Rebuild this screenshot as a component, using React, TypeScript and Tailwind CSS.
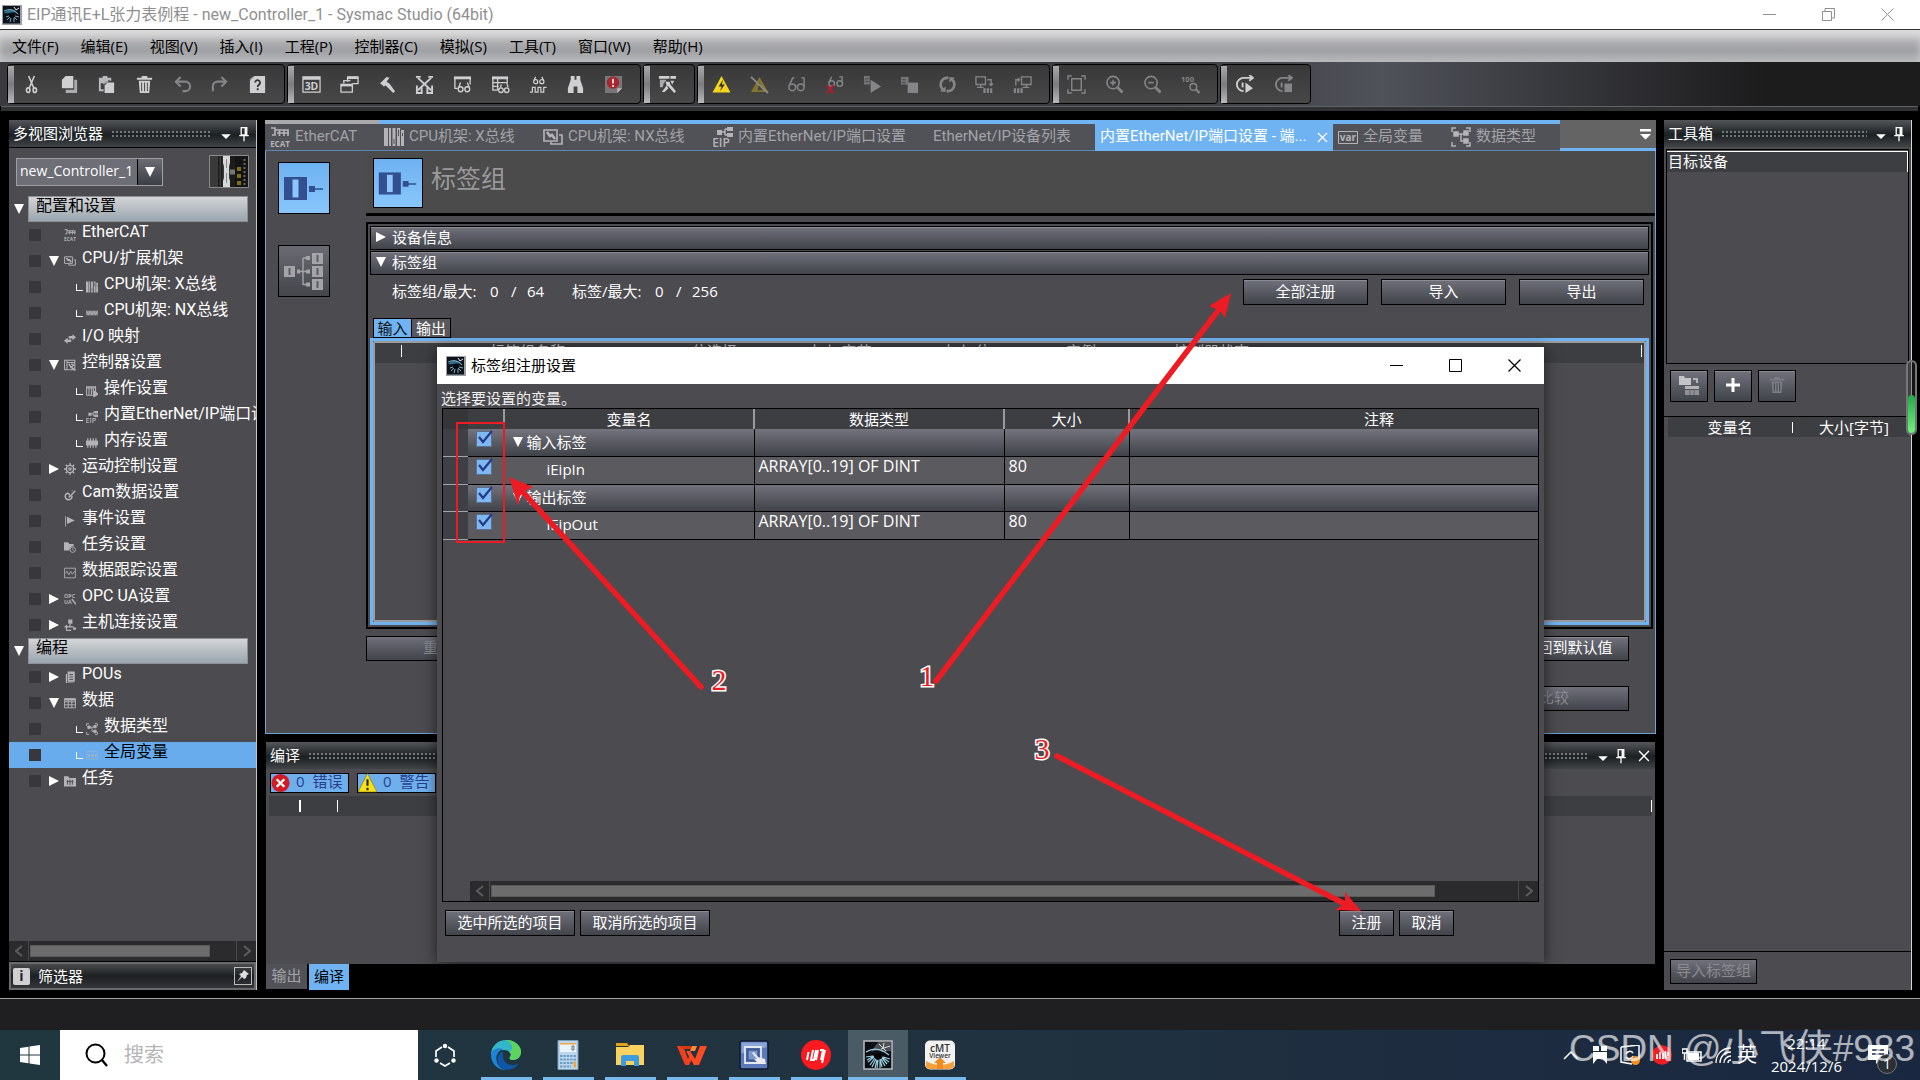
import type { ReactNode } from "react";

/* ---------- icons ---------- */

const glyphs: Record<string, ReactNode> = {
  cut: (
    <g fill="none" stroke="currentColor" strokeWidth="1.700">
      <path d="M7 1l5.500 13M13 1L7.500 14" />
      <ellipse cx="6.500" cy="16" rx="1.800" ry="2.400" />
      <ellipse cx="13.500" cy="16" rx="1.800" ry="2.400" />
    </g>
  ),
  copy: (
    <g fill="currentColor">
      <path d="M6 1h8v13H2V5z" />
      <path d="M15 5h3v14H6v-3.500h9z" opacity=".75" />
    </g>
  ),
  paste: (
    <g fill="currentColor">
      <path d="M2 3h4V1h5v2h4v3h-2V5L4 9v6h3v2H2z" opacity=".85" />
      <path d="M11 8h7v11H8v-8z" />
      <path d="M5 8l7-3v2L7 10z" opacity=".7" />
    </g>
  ),
  trash: (
    <g fill="currentColor">
      <path d="M7 1h6v2h5v2H2V3h5z" />
      <path d="M4 6h12l-1 13H5z" />
      <path d="M7 8v9M10 8v9M13 8v9" stroke="#444" strokeWidth="1" />
    </g>
  ),
  undo: (
    <g fill="none" stroke="currentColor" strokeWidth="2.200">
      <path d="M4 7h9a4 4 0 0 1 0 10h-3" />
      <path d="M8 2L3 7l5 5" />
    </g>
  ),
  redo: (
    <g fill="none" stroke="currentColor" strokeWidth="2.200">
      <path d="M16 7H8a5 5 0 0 0-5 5v5" />
      <path d="M12 2l5 5-5 5" />
    </g>
  ),
  help: (
    <g>
      <path d="M7 1h11v18H2V6z" fill="currentColor" />
      <path d="M1 5L6 1v4z" fill="currentColor" opacity=".6" />
      <path d="M7.500 8a2.600 2.600 0 1 1 4 2.200c-1 .7-1.300 1-1.300 2.300" fill="none" stroke="#333" strokeWidth="1.900" />
      <path d="M9.200 14h2v2h-2z" fill="#333" />
    </g>
  ),
  threed: (
    <g>
      <path d="M1 2h18v16H1z" fill="none" stroke="currentColor" strokeWidth="1.300" />
      <path d="M1 2h18v3H1z" fill="currentColor" />
      <text x="10" y="15.500" textAnchor="middle" fontSize="11" fontWeight="700" fill="currentColor">3D</text>
    </g>
  ),
  windows: (
    <g fill="none" stroke="currentColor" strokeWidth="1.400">
      <path d="M8 7V2h11v7h-6" />
      <path d="M8 3h11" strokeWidth="2.500" />
      <path d="M1 10h12v8H1z" />
      <path d="M1 11h12" strokeWidth="2" />
      <path d="M4 9V6h7" />
    </g>
  ),
  hammer: (
    <g fill="currentColor">
      <path d="M2 9l7-7 3 1-3 4 3 2 6 8-2 2-8-8-2 1-2-2z" />
    </g>
  ),
  cross: (
    <g fill="none" stroke="currentColor">
      <path d="M3 3l14 13M17 3L3 16" strokeWidth="2" />
      <path d="M1 2h5M14 2h5" strokeWidth="2" />
      <path d="M2 11v8h5v-6M18 11v8h-5v-6" strokeWidth="2" />
    </g>
  ),
  watch: (
    <g fill="none" stroke="currentColor" strokeWidth="1.400">
      <path d="M1 3h18" strokeWidth="3" />
      <path d="M2 4v10h3M18 4v6" />
      <circle cx="8" cy="15" r="2.600" />
      <circle cx="15" cy="15" r="2.600" />
      <path d="M6 13l2-5M17 13l-2-5" />
    </g>
  ),
  watch2: (
    <g fill="none" stroke="currentColor" strokeWidth="1.400">
      <path d="M1 3h17" strokeWidth="3" />
      <path d="M2 4v12h5M2 8h15M2 12h6M7 4v12M17 4v6" />
      <circle cx="10.500" cy="16" r="2.400" />
      <circle cx="16.500" cy="16" r="2.400" />
      <path d="M10 13l1-3M18 13l-1-3" />
    </g>
  ),
  trace: (
    <g fill="none" stroke="currentColor" strokeWidth="1.300">
      <circle cx="7" cy="7" r="2.200" />
      <circle cx="13.500" cy="7" r="2.200" />
      <path d="M5 6l2-4M15.500 6l-2-4" />
      <path d="M1 18h2.500v-5h3v5h3v-5h3v5h3v-5h3" />
    </g>
  ),
  find: (
    <g fill="currentColor">
      <path d="M5 1h4v4h2V1h4v4l3 9v5h-6v-7H8v7H2v-5l3-9z" />
    </g>
  ),
  alert: (
    <g>
      <path d="M1 1h18v13l-5 5H1z" fill="#77777a" />
      <path d="M14 19v-5h5" fill="#bbb" />
      <circle cx="9.500" cy="8" r="6.500" fill="#a8242e" />
      <path d="M9.500 4v5M9.500 10.500v2" stroke="#ddd" strokeWidth="2" />
    </g>
  ),
  wrench: (
    <g fill="currentColor">
      <path d="M1 1h11v3H1zM13 1h6v3h-6z" />
      <path d="M2 5h7L6 9l-1 4H2z" opacity=".75" />
      <path d="M8 7h4l1 3 6 7-2 2-6-7-2-1z" />
      <path d="M13 6h4l-2 4zM4 18l5-7 2 3-4 4z" />
    </g>
  ),
  volt: (
    <g>
      <path d="M10 1L19.500 18.500H.5z" fill="#f2d51c" />
      <path d="M11.500 5L7 12h3l-1.500 5 5-7h-3z" fill="#333" />
    </g>
  ),
  voltoff: (
    <g>
      <path d="M10 2l9 16H1z" fill="#84762a" />
      <path d="M10 7l3 9H8z" fill="#444" />
      <path d="M1 2l18 17" stroke="#8b8b8d" strokeWidth="2" />
    </g>
  ),
  glasses: (
    <g fill="none" stroke="currentColor" strokeWidth="1.500">
      <circle cx="5.500" cy="13" r="3.500" />
      <circle cx="14.500" cy="13" r="3.500" />
      <path d="M2 12L6 3h2M18 12V3h-3M9 12h2" />
    </g>
  ),
  glassesx: (
    <g fill="none" stroke="currentColor" strokeWidth="1.500">
      <circle cx="7" cy="9" r="3" />
      <circle cx="15.500" cy="9" r="3" />
      <path d="M4 8l3-6M18 8V2h-3" />
      <path d="M2 11l7 8M9 11l-7 8" stroke="#a8202f" strokeWidth="2.600" />
    </g>
  ),
  run: (
    <g fill="currentColor">
      <path d="M1 1h6v9H1z" opacity=".8" />
      <path d="M8 5l11 7-11 7z" />
      <path d="M2 4h4M2 7h4" stroke="#444" />
    </g>
  ),
  halt: (
    <g fill="currentColor">
      <path d="M1 2h8v8H1z" opacity=".8" />
      <path d="M8 8h11v11H8z" />
      <path d="M2 5h4M2 8h4" stroke="#444" />
    </g>
  ),
  sync: (
    <g fill="none" stroke="currentColor" strokeWidth="2.800">
      <path d="M11 3H9a7 7 0 0 0-4 12M9 17h2a7 7 0 0 0 4-12" />
      <path d="M8 12v6l-6-1zM12 8V2l6 1z" fill="currentColor" stroke="none" />
    </g>
  ),
  download: (
    <g fill="none" stroke="currentColor" strokeWidth="1.400">
      <path d="M1 2h10v8H1zM6 10v3M2 13h7M13 5h4v6M15 9l2 2 2-2" />
      <path d="M10 14v5M13.500 14v5M17 14v5" strokeWidth="2.400" />
    </g>
  ),
  upload: (
    <g fill="none" stroke="currentColor" strokeWidth="1.400">
      <path d="M9 2h10v8H9zM14 10v3M10 13h7M7 5H3v6M5 3l2 2-2 2" />
      <path d="M2 14v5M5.500 14v5M9 14v5" strokeWidth="2.400" />
    </g>
  ),
  fit: (
    <g fill="none" stroke="currentColor" strokeWidth="1.500">
      <path d="M5 4h10v12H5z" />
      <path d="M1 5V1h4M15 1h4v4M19 15v4h-4M5 19H1v-4" />
    </g>
  ),
  zoomin: (
    <g fill="none" stroke="currentColor" strokeWidth="1.700">
      <circle cx="8.500" cy="8" r="6.500" />
      <path d="M8.500 5v6M5.500 8h6" />
      <path d="M13 13l5.500 5.500" strokeWidth="3" />
    </g>
  ),
  zoomout: (
    <g fill="none" stroke="currentColor" strokeWidth="1.700">
      <circle cx="8.500" cy="8" r="6.500" />
      <path d="M5.500 8h6" />
      <path d="M13 13l5.500 5.500" strokeWidth="3" />
    </g>
  ),
  zoom100: (
    <g fill="none" stroke="currentColor" strokeWidth="1.500">
      <text x="0" y="7.500" fontSize="8" fontWeight="700" stroke="none" fill="currentColor">100</text>
      <circle cx="13" cy="12.500" r="3.500" />
      <path d="M15.500 15l4 4" strokeWidth="2.200" />
    </g>
  ),
  simrun: (
    <g fill="none" stroke="currentColor" strokeWidth="2">
      <path d="M9 17a7 7 0 1 1 0-14h9M15 0l4 3-4 3" />
      <path d="M8 8v5" />
      <path d="M11 8l8 6-8 5z" fill="currentColor" stroke="none" />
    </g>
  ),
  simstop: (
    <g fill="none" stroke="currentColor" strokeWidth="2">
      <path d="M9 17a7 7 0 1 1 0-14h9M15 0l4 3-4 3" />
      <path d="M8 8v5" />
      <path d="M11 9h8v9h-8z" fill="currentColor" stroke="none" />
    </g>
  ),
  ecat: (
    <g fill="currentColor">
      <path d="M1 1h4v2h14M5 3v5H2M9.500 3v6M14 3v6M18 3v6M7 6h12" fill="none" stroke="currentColor" strokeWidth="1.600" />
      <text x="10" y="19.500" textAnchor="middle" fontSize="8" fontWeight="700">ECAT</text>
    </g>
  ),
  rack: (
    <g fill="none" stroke="currentColor" strokeWidth="1.600">
      <path d="M1 3h13v11H1zM16 8h3v9H8v-2" />
      <path d="M4 5l3 4 2-1 3 4" strokeWidth="2.600" />
    </g>
  ),
  xbus: (
    <g fill="currentColor">
      <path d="M0 1h7v18H0zM8.500 1h3v18h-3zM13 1h3v18h-3zM17 3h3v16h-3z" />
      <path d="M4.500 1v18M10 12v5M14.500 3v6M18.500 6v3" stroke="#515257" />
    </g>
  ),
  nxbus: (
    <g fill="currentColor">
      <path d="M0 6h20v8H0z" opacity=".6" />
      <path d="M1 7l3 6 3-6 3 6 3-6 3 6 3-6" fill="none" stroke="currentColor" strokeWidth="1.600" />
    </g>
  ),
  io: (
    <g fill="currentColor">
      <path d="M8 5h6V2l6 5-6 5V9H8zM12 11H6V8l-6 5 6 5v-3h6z" />
    </g>
  ),
  ctrl: (
    <g fill="none" stroke="currentColor" strokeWidth="1.700">
      <path d="M1 2h17v16H1zM5 2v16M5 6h13" />
      <path d="M8 8l4 6 7 5M12 8l4 2-4 4" strokeWidth="2.400" />
    </g>
  ),
  oper: (
    <g fill="none" stroke="currentColor" strokeWidth="1.700">
      <path d="M1 3h15v14H1zM5 3v14M9 6v11M12 6v8M1 5h15" />
      <path d="M13 10l7 5-7 5z" fill="currentColor" />
    </g>
  ),
  eip: (
    <g fill="currentColor">
      <path d="M4 3h5v5H4zM14 0h6v4h-6zM14 6h6v4h-6z" />
      <path d="M8 5h4M12 2v6M12 2h3M12 8h3" stroke="currentColor" strokeWidth="1.500" fill="none" />
      <text x="8" y="20" textAnchor="middle" fontSize="12" fontWeight="600">EIP</text>
    </g>
  ),
  mem: (
    <g fill="currentColor">
      <path d="M0 6h20v8H0z" />
      <path d="M3 2v16M7.500 2v16M12 2v16M16.500 2v16" stroke="currentColor" strokeWidth="2" />
    </g>
  ),
  gear: (
    <g fill="none" stroke="currentColor">
      <circle cx="10" cy="10" r="6" strokeWidth="2.400" />
      <circle cx="10" cy="10" r="2" strokeWidth="2" />
      <path d="M10 0v4M10 16v4M0 10h4M16 10h4M3 3l3 3M14 14l3 3M17 3l-3 3M6 14l-3 3" strokeWidth="2.200" />
    </g>
  ),
  cam: (
    <g fill="none" stroke="currentColor" strokeWidth="2.400">
      <path d="M13 11a5.500 5.500 0 1 1-7-4c3 0 2 3 4 3" />
      <path d="M8 14L19 3M13 3h1" />
    </g>
  ),
  flag: (
    <g fill="currentColor">
      <path d="M2 2h1.500v17H2zM5 3l13 6-13 6z" />
    </g>
  ),
  taskset: (
    <g fill="currentColor">
      <path d="M0 2h7l2 3h7v4a6 6 0 0 0-7 7H0z" />
      <circle cx="14.500" cy="14.500" r="4.500" fill="none" stroke="currentColor" strokeWidth="1.500" />
      <path d="M14.500 12v3h2" fill="none" stroke="currentColor" />
    </g>
  ),
  dtrace: (
    <g fill="none" stroke="currentColor" strokeWidth="1.400">
      <path d="M1 2h18v16H1z" />
      <path d="M2 11l3-4 3 6 3-6 3 5 4-5" />
    </g>
  ),
  opc: (
    <g fill="currentColor">
      <text x="0" y="9" fontSize="9" fontWeight="700">OPC</text>
      <text x="0" y="19" fontSize="9" fontWeight="700">UA</text>
      <path d="M13 10l7 9" stroke="currentColor" strokeWidth="2.400" />
    </g>
  ),
  host: (
    <g fill="currentColor">
      <path d="M7 1h7v7H7zM15 14h5v4h-5z" />
      <path d="M10 8v5h6M10 13H4v6M1 14l3-3 3 3M4 19h8" fill="none" stroke="currentColor" strokeWidth="2" />
    </g>
  ),
  pou: (
    <g fill="currentColor">
      <path d="M6 1h12v17H6zM3 5h2v14h11v1H3z" />
      <path d="M9 6h6M9 10h6M9 14h6" stroke="#4c4b4f" strokeWidth="1.600" />
    </g>
  ),
  data: (
    <g fill="none" stroke="currentColor" strokeWidth="1.600">
      <path d="M1 3h18v15H1zM1 8h18M1 13h18M7 4v14M13 4v14" />
      <path d="M1 4h18" strokeWidth="3.500" />
    </g>
  ),
  dtype: (
    <g fill="none" stroke="currentColor" strokeWidth="1.500">
      <path d="M5 1H1v4M15 1h4v4M19 15v4h-4M5 19H1v-4" />
      <path d="M3 5h4v4H3zM13 4h4v4h-4zM13 12h4v4h-4z" fill="currentColor" />
      <path d="M7 7h6M10 7v7h3" />
    </g>
  ),
  varr: (
    <g fill="currentColor">
      <path d="M.5 4.500h19v12H.5z" fill="none" stroke="currentColor" />
      <text x="10" y="13.500" textAnchor="middle" fontSize="10" fontWeight="700">var</text>
    </g>
  ),
  tasks: (
    <g fill="currentColor">
      <path d="M0 2h7l2 3h11v14H0z" />
      <path d="M4 11h12M10 7v10M6 8v8M14 8v8" stroke="#4c4b4f" strokeWidth="1.500" />
    </g>
  ),
  pin: (
    <g fill="none" stroke="#fff" strokeWidth="1.600">
      <path d="M6.500 2h7v9h-7zM4 12h12M10 12v7" />
      <path d="M12 2v9" strokeWidth="2.500" />
    </g>
  ),
  down: <path d="M2 7h16l-8 8z" fill="currentColor" />,
  close: <path d="M3 3l14 14M17 3L3 17" stroke="currentColor" strokeWidth="2" fill="none" />,
};

function Glyph({ name, className }: { name: string; className: string }) {
  return (
    <svg viewBox="0 0 20 20" className={`shrink-0 ${className}`} fontFamily="Open Sans, sans-serif" aria-hidden="true">
      {glyphs[name]}
    </svg>
  );
}

function AppLogo({ className }: { className: string }) {
  return (
    <svg viewBox="0 0 20 20" className={`shrink-0 ${className}`} aria-hidden="true">
      <path d="M0 0h20v20H0z" fill="#9a9fa3" />
      <path d="M1 1h17v17.500H1z" fill="#0c131c" />
      <path d="M2 8C6 3 13 3 17 10c-2-2-4-3-6-2.500C8 7 5 9 2 8z" fill="#2c6f8e" />
      <g stroke="#8fb9c9" strokeWidth=".9" fill="none">
        <path d="M4 12l3-1M5 15l3-3M8 17l1-4M12 17v-4M15 15l-3-3M17 12l-4-1M2 6q8-4 14 3" />
        <path d="M12 2l2 3M17 3l-3 2" stroke="#fff" />
      </g>
      <circle cx="10" cy="10" r="2.200" fill="#020509" />
    </svg>
  );
}

function Tri({ open, className = "" }: { open: boolean; className?: string }) {
  return (
    <svg viewBox="0 0 10 10" className={`size-[10px] shrink-0 ${className}`} aria-hidden="true">
      <path d={open ? "M0 0h10L5 10z" : "M0 0v10l10-5z"} fill="#fff" />
    </svg>
  );
}

/* ---------- shared pieces ---------- */

const raised =
  "border border-black bg-linear-to-b from-[#70717b] to-[#42444b] shadow-[inset_0_1px_0_#8b8c94] pb-[2px] text-[15px] leading-none text-white";

const dimmed =
  "border border-black bg-linear-to-b from-[#70717b] to-[#42444b] pb-[2px] text-[15px] leading-none text-[#8b8b91]";

function PanelHeader({ title, closable = false }: { title: string; closable?: boolean }) {
  return (
    <div className="flex h-[27px] shrink-0 items-center gap-2 bg-linear-to-b from-[#55565a] via-[#1b2023] via-55% to-[#424547] px-1 text-[15px] text-white">
      <h2 className="shrink-0 leading-none">{title}</h2>
      <div className="h-[7px] flex-1 bg-[radial-gradient(#77797c_1px,transparent_1px)] bg-[length:4px_4px]" />
      <button type="button" aria-label="窗口位置" className="flex">
        <Glyph name="down" className="mt-1 size-3" />
      </button>
      <button type="button" aria-label="固定" className="-ml-1 flex">
        <Glyph name="pin" className="size-4" />
      </button>
      {closable && (
        <button type="button" aria-label="关闭" className="flex">
          <Glyph name="close" className="size-[14px]" />
        </button>
      )}
    </div>
  );
}

/* ---------- title, menu, toolbar ---------- */

function TitleBar() {
  return (
    <header className="flex h-[29px] shrink-0 items-center bg-white pl-[2px] text-[#8f8f8f]">
      <AppLogo className="size-5" />
      <h1 className="ml-[5px] flex-1 text-base leading-none [font-family:'Roboto','Noto_Sans_CJK_SC',sans-serif]">EIP通讯E+L张力表例程 - new_Controller_1 - Sysmac Studio (64bit)</h1>
      <div className="flex gap-[46px] pr-[26px]">
        <button type="button" aria-label="最小化">
          <svg viewBox="0 0 13 13" className="size-[13px]"><path d="M0 6.500h13" stroke="currentColor" /></svg>
        </button>
        <button type="button" aria-label="向下还原">
          <svg viewBox="0 0 13 13" className="size-[13px]"><path d="M.5 3.500h9v9h-9zM3 3V.5h9.500V10H10" fill="none" stroke="currentColor" /></svg>
        </button>
        <button type="button" aria-label="关闭">
          <svg viewBox="0 0 13 13" className="size-[13px]"><path d="M.5 .5l12 12M12.500 .5l-12 12" stroke="currentColor" /></svg>
        </button>
      </div>
    </header>
  );
}

const menus = ["文件(F)", "编辑(E)", "视图(V)", "插入(I)", "工程(P)", "控制器(C)", "模拟(S)", "工具(T)", "窗口(W)", "帮助(H)"];

function MenuBar() {
  return (
    <nav className="flex h-[33px] shrink-0 items-center gap-[22px] border-t border-[#333] bg-linear-to-b from-[#bcbcbe] via-[#a0a1a4] via-65% to-[#b8b9bb] px-3 shadow-[inset_0_9px_8px_-2px_#dcdcdc]">
      {menus.map((m) => (
        <button key={m} type="button" className="text-[15px] leading-none text-black">{m}</button>
      ))}
    </nav>
  );
}

const toolGroups: { width: string; items: [string, boolean][] }[] = [
  { width: "w-[278px]", items: [["cut", true], ["copy", true], ["paste", true], ["trash", true], ["undo", false], ["redo", false], ["help", true]] },
  { width: "w-[354px]", items: [["threed", true], ["windows", true], ["hammer", true], ["cross", true], ["watch", true], ["watch2", true], ["trace", true], ["find", true], ["alert", true]] },
  { width: "w-[52px]", items: [["wrench", true]] },
  { width: "w-[353px]", items: [["volt", true], ["voltoff", true], ["glasses", false], ["glassesx", false], ["run", false], ["halt", false], ["sync", false], ["download", false], ["upload", false]] },
  { width: "w-[166px]", items: [["fit", false], ["zoomin", false], ["zoomout", false], ["zoom100", false]] },
  { width: "w-[91px]", items: [["simrun", true], ["simstop", false]] },
];

function Toolbar() {
  return (
    <div className="shrink-0 bg-black">
      <div className="flex h-11 items-center gap-[2px] bg-linear-to-r from-[#3a3b3e] from-60% via-[#50525a] via-72% to-[#1c1c1d] to-92% pl-[7px]">
        {toolGroups.map((g, i) => (
          <div key={i} className={`flex h-10 items-center rounded-sm border border-black bg-linear-to-b from-[#383838] to-[#484848] ${g.width}`}>
            <span className="h-[37px] w-[6px] bg-linear-to-b from-[#a9a9ab] via-[#7c7c7e] to-[#b9b9bb]" />
            <div className="flex flex-1 justify-between pr-[17px] pl-2">
              {g.items.map(([n, on]) => (
                <button key={n} type="button" aria-label={n} className={on ? "flex text-[#cfcfd1]" : "flex text-[#858588]"}>
                  <Glyph name={n} className="size-[19px]" />
                </button>
              ))}
            </div>
          </div>
        ))}
      </div>
      <div className="mr-[2px] ml-[1px] h-[5px] border-t border-[#606264] bg-[#303133]" />
    </div>
  );
}

/* ---------- project tree ---------- */

type Node = { label: string; kind: "head" | "item" | "leaf" | "child"; icon?: string; open?: boolean; selected?: boolean };

const tree: Node[] = [
  { label: "配置和设置", kind: "head" },
  { label: "EtherCAT", kind: "leaf", icon: "ecat" },
  { label: "CPU/扩展机架", kind: "item", icon: "rack", open: true },
  { label: "CPU机架: X总线", kind: "child", icon: "xbus" },
  { label: "CPU机架: NX总线", kind: "child", icon: "nxbus" },
  { label: "I/O 映射", kind: "leaf", icon: "io" },
  { label: "控制器设置", kind: "item", icon: "ctrl", open: true },
  { label: "操作设置", kind: "child", icon: "oper" },
  { label: "内置EtherNet/IP端口设置", kind: "child", icon: "eip" },
  { label: "内存设置", kind: "child", icon: "mem" },
  { label: "运动控制设置", kind: "item", icon: "gear", open: false },
  { label: "Cam数据设置", kind: "leaf", icon: "cam" },
  { label: "事件设置", kind: "leaf", icon: "flag" },
  { label: "任务设置", kind: "leaf", icon: "taskset" },
  { label: "数据跟踪设置", kind: "leaf", icon: "dtrace" },
  { label: "OPC UA设置", kind: "item", icon: "opc", open: false },
  { label: "主机连接设置", kind: "item", icon: "host", open: false },
  { label: "编程", kind: "head" },
  { label: "POUs", kind: "item", icon: "pou", open: false },
  { label: "数据", kind: "item", icon: "data", open: true },
  { label: "数据类型", kind: "child", icon: "dtype" },
  { label: "全局变量", kind: "child", icon: "varr", selected: true },
  { label: "任务", kind: "item", icon: "tasks", open: false },
];

function TreeRow({ node }: { node: Node }) {
  if (node.kind === "head") {
    return (
      <li className="flex h-[26px] items-center pr-2 pl-[5px]">
        <Tri open />
        <button type="button" className="ml-1 h-[26px] flex-1 border border-[#8c9094] bg-linear-to-b from-[#d4d5d7] to-[#9aa5ae] pb-[6px] pl-[7px] text-left text-base leading-none text-black">
          {node.label}
        </button>
      </li>
    );
  }
  return (
    <li className={`flex h-[26px] items-center pl-5 ${node.selected ? "bg-[#68acee] text-black" : "text-white"}`}>
      <span className="size-3 shrink-0 bg-[#38383c]" />
      {node.kind === "child" ? (
        <span className="mr-[3px] ml-[35px] h-[7px] w-[7px] shrink-0 border-b border-l border-white" />
      ) : node.kind === "item" ? (
        <Tri open={!!node.open} className="mr-[5px] ml-2" />
      ) : (
        <span className="ml-[23px]" />
      )}
      <Glyph name={node.icon ?? "data"} className={node.selected ? "size-3 text-[#a9b6c4]" : "size-3 text-[#b4b4b8]"} />
      <button type="button" className="ml-[6px] pb-[6px] text-left text-base leading-none whitespace-nowrap">{node.label}</button>
    </li>
  );
}

function HScroll({ thumb }: { thumb: string }) {
  return (
    <div className="flex h-5 items-center bg-[#2b2b2d] text-[#5c5c5f]">
      <button type="button" aria-label="向左滚动" className="flex h-full w-5 items-center justify-center border-r border-[#47474a]">
        <svg viewBox="0 0 8 12" className="h-3 w-2"><path d="M7 1L1 6l6 5" fill="none" stroke="currentColor" strokeWidth="2" /></svg>
      </button>
      <div className="flex-1 px-px">
        <div className={`h-3 border border-[#5a5a5a] bg-[#6c6c6c] ${thumb}`} />
      </div>
      <button type="button" aria-label="向右滚动" className="flex h-full w-5 items-center justify-center border-l border-[#47474a]">
        <svg viewBox="0 0 8 12" className="h-3 w-2"><path d="M1 1l6 5-6 5" fill="none" stroke="currentColor" strokeWidth="2" /></svg>
      </button>
    </div>
  );
}

function Explorer() {
  return (
    <aside className="flex w-[248px] shrink-0 flex-col overflow-hidden border-r border-[#c4c4c4] bg-[#4c4b4f]">
      <PanelHeader title="多视图浏览器" />
      <div className="flex items-center justify-between border-t border-black pt-[7px] pr-[7px] pl-[7px]">
        <label className="relative flex">
          <span className="sr-only">控制器</span>
          <select className="h-7 w-[147px] appearance-none border border-[#a0a0a4] bg-[#6d6e76] pb-[2px] pl-[3px] text-sm leading-none text-white">
            <option>new_Controller_1</option>
          </select>
          <span className="pointer-events-none absolute inset-y-px right-px flex w-[25px] items-center justify-center border-l border-black bg-linear-to-b from-[#6a6b73] to-[#3d3f46]">
            <Tri open />
          </span>
        </label>
        <svg viewBox="0 0 40 33" className="h-[33px] w-10" aria-hidden="true">
          <path d="M.5 .5h39v32H.5z" fill="#3a3a3b" stroke="#8a8a8c" />
          <path d="M9 1h1.500v31H9zM12 1h1.500v31H12zM21 1h5v31h-5z" fill="#1c1c1c" />
          <path d="M14 1h7v7l-1 3v12l1 3v6h-7v-6l1-3V11l-1-3z" fill="#d8d8d8" />
          <path d="M17.500 4v9M17.500 18v10" stroke="#888" />
          <path d="M26 1h13v31H26z" fill="#141414" />
          <path d="M28 12h4v4h-4zM28 19h4v4h-4zM28 26h4v4h-4z" fill="#7c6f1a" />
          <path d="M35.500 4v27" stroke="#666" strokeWidth="2" strokeDasharray="2 2" />
          <path d="M21 17h5" stroke="#777" strokeWidth="5" />
        </svg>
      </div>
      <ul className="mt-2 flex-1 [font-family:'Roboto','Noto_Sans_CJK_SC',sans-serif]">
        {tree.map((n, i) => (
          <TreeRow key={i} node={n} />
        ))}
      </ul>
      <HScroll thumb="w-[88%]" />
      <div className="mt-px flex h-7 items-center gap-2 border-2 border-[#6a6a6c] bg-linear-to-b from-[#4b4c4e] via-[#1d2022] to-[#34363a] pr-[2px] pl-[2px] outline outline-black">
        <span className="flex size-[17px] items-center justify-center rounded-xs bg-[#d0d0d2] text-sm leading-none font-bold text-[#222]">i</span>
        <span className="flex-1 text-[15px] leading-none text-white">筛选器</span>
        <button type="button" aria-label="固定筛选器" className="flex size-[18px] items-center justify-center border border-[#bbb]">
          <svg viewBox="0 0 14 14" className="size-[14px]"><path d="M8 1l5 4-2 1-1 3-2 1-2-2-5 5 4-6-2-2 3-1z" fill="#ddd" /></svg>
        </button>
      </div>
    </aside>
  );
}

/* ---------- editor ---------- */

const tabs: { label: string; icon?: string; cls: string; active?: boolean }[] = [
  { label: "EtherCAT", icon: "ecat", cls: "w-[114px] border-t-[#a9a9ab]" },
  { label: "CPU机架: X总线", icon: "xbus", cls: "w-[159px] border-t-[#6fb3f2]" },
  { label: "CPU机架: NX总线", icon: "rack", cls: "w-[170px] border-t-[#6fb3f2]" },
  { label: "内置EtherNet/IP端口设置", icon: "eip", cls: "w-[220px] border-t-[#6fb3f2]" },
  { label: "EtherNet/IP设备列表", cls: "w-[167px] border-t-[#6fb3f2]" },
  { label: "内置EtherNet/IP端口设置 - 端...", cls: "w-[238px] border-t-[#6fb3f2]", active: true },
  { label: "全局变量", icon: "varr", cls: "w-[113px] border-t-[#6fb3f2]" },
  { label: "数据类型", icon: "dtype", cls: "w-[114px] border-t-[#6fb3f2]" },
];

function EditorTabs() {
  return (
    <div className="flex h-[31px] shrink-0 bg-[#646464] [font-family:'Roboto','Noto_Sans_CJK_SC',sans-serif]" role="tablist">
      {tabs.map((t, i) => (
        <div
          key={i}
          className={`flex shrink-0 items-center overflow-hidden border-t-4 border-b pl-[5px] ${t.cls} ${t.active ? "border-b-[#6fb3f2] bg-[#6fb3f2] text-white" : "border-b-[#5c86b3] bg-[#515257] text-[#a2a3a8]"}`}
        >
          {t.icon && <Glyph name={t.icon} className="mr-[5px] size-5 text-[#b4b4b8]" />}
          <button type="button" role="tab" aria-selected={!!t.active} className="pb-[2px] text-[15px] leading-none whitespace-nowrap">{t.label}</button>
          {t.active && (
            <button type="button" aria-label="关闭选项卡" className="mr-1 ml-auto flex">
              <Glyph name="close" className="size-[13px]" />
            </button>
          )}
        </div>
      ))}
      <div className="flex flex-1 items-center justify-end border-b-[3px] border-[#6fb3f2] pr-[5px]">
        <button type="button" aria-label="选项卡列表">
          <svg viewBox="0 0 11 11" className="size-[11px]"><path d="M0 0h11v2.500H0zM0 5h11l-5.500 5.500z" fill="#fff" /></svg>
        </button>
      </div>
    </div>
  );
}

function TagIcon() {
  return (
    <svg viewBox="0 0 50 50" className="size-full" aria-hidden="true">
      <path d="M5 14h23v23H5z" fill="#32508f" />
      <path d="M13.500 16.500h6v18h-6z" fill="#8cc6fa" />
      <path d="M30 23h6v6h-6zM36 25.200h8v1.600h-8z" fill="#32508f" />
    </svg>
  );
}

function Editor() {
  return (
    <section className="flex min-h-0 flex-col border-x border-b border-[#6ea3d8] bg-[#4c4b4f]">
      <div className="flex h-[582px]">
        <div className="flex w-[100px] shrink-0 flex-col gap-[31px] pt-[11px] pl-3">
          <button type="button" aria-label="标签组" className="size-[52px] border border-black bg-linear-to-b from-[#6fb2f2] to-[#88c6fb]">
            <TagIcon />
          </button>
          <button type="button" aria-label="连接" className="size-[52px] border border-black bg-linear-to-b from-[#6a6b73] to-[#44464c]">
            <svg viewBox="0 0 50 50" className="size-full" aria-hidden="true">
              <g fill="#a4a4a8">
                <path d="M5 20h11v11H5zM33 7h11v11H33zM33 20h11v11H33zM33 33h11v11H33z" />
                <path d="M18 23.500h3v4h-3zM27 10h4v4h-4zM27 23.500h4v4h-4zM27 36.500h4v4h-4z" />
              </g>
              <path d="M20 25.500h8M24 12v27M24 12h5M24 38.500h5" stroke="#a4a4a8" strokeWidth="1.400" fill="none" />
              <path d="M9.500 22h2v7h-2zM37.500 9h2v7h-2zM37.500 22h2v7h-2zM37.500 35h2v7h-2z" fill="#5c5d64" />
            </svg>
          </button>
        </div>
        <div className="min-w-0 flex-1">
          <div className="flex h-[65px] items-start gap-2 border-b-[3px] border-black bg-[#4b4b4c] pt-[7px] pl-[7px]">
            <div className="size-[50px] border border-black bg-linear-to-b from-[#6fb2f2] to-[#88c6fb]">
              <TagIcon />
            </div>
            <h2 className="pt-2 text-[25px] leading-none text-[#99999b]">标签组</h2>
          </div>
          <div className="mt-[6px] mr-[2px] flex h-[407px] flex-col border-2 border-black p-[2px]">
            <button type="button" className={`flex h-6 shrink-0 items-center gap-[6px] pl-[5px] ${raised}`}>
              <Tri open={false} />
              设备信息
            </button>
            <button type="button" className={`mt-px flex h-6 shrink-0 items-center gap-[6px] pl-[5px] ${raised}`}>
              <Tri open />
              标签组
            </button>
            <div className="mt-1 flex h-[26px] shrink-0 items-center pr-[5px] pl-[22px] text-[15px] leading-none text-white">
              <p className="flex w-[180px] pb-[2px]">
                <span className="w-[98px]">标签组/最大:</span>
                <span className="w-[21px]">0</span>
                <span className="w-4">/</span>
                <span>64</span>
              </p>
              <p className="flex flex-1 pb-[2px]">
                <span className="w-[83px]">标签/最大:</span>
                <span className="w-[21px]">0</span>
                <span className="w-4">/</span>
                <span>256</span>
              </p>
              <div className="flex gap-[13px]">
                <button type="button" className={`h-[26px] w-[125px] ${raised}`}>全部注册</button>
                <button type="button" className={`h-[26px] w-[125px] ${raised}`}>导入</button>
                <button type="button" className={`h-[26px] w-[125px] ${raised}`}>导出</button>
              </div>
            </div>
            <div className="mt-[13px] ml-[3px] flex h-5 shrink-0 text-[15px] leading-none">
              <button type="button" className="w-[39px] border border-black bg-[#6fb3f2] text-[#111]">输入</button>
              <button type="button" className="w-[39px] border border-l-0 border-black bg-[#59595d] text-white">输出</button>
            </div>
            <div className="flex min-h-0 flex-1 flex-col border-[3px] border-[#6fb3f2]">
              <div className="flex-1 overflow-hidden rounded-xs border-2 border-[#9b9b9e]">
                <div className="flex h-5 items-center bg-[#3d3e42] pb-1 text-[15px] leading-none text-[#d0d0d0]">
                  <span className="ml-[26px] h-3 w-px bg-white" />
                  <span className="ml-[88px] w-[202px]">标签组名称</span>
                  <span className="w-[115px]">位选择</span>
                  <span className="w-[134px]">大小(字节)</span>
                  <span className="w-[125px]">大小(位)</span>
                  <span className="w-[108px]">实例ID</span>
                  <span className="flex-1">控制器状态</span>
                  <span className="mr-[2px] h-3 w-px bg-white" />
                </div>
              </div>
            </div>
          </div>
          <div className="mt-[7px] flex justify-between pr-[26px]">
            <button type="button" className={`h-[25px] w-[226px] ${dimmed}`}>重新开始(设备)(I)</button>
            <button type="button" className={`h-[25px] w-[123px] ${raised}`}>返回到默认值</button>
          </div>
          <div className="mt-[25px] flex justify-end pr-[26px]">
            <button type="button" className={`h-[25px] w-[150px] ${dimmed}`}>比较</button>
          </div>
        </div>
      </div>
    </section>
  );
}

function BuildPanel() {
  return (
    <section className="mt-2 flex flex-1 flex-col px-px">
      <div className="flex flex-1 flex-col bg-[#4c4b4f]">
        <PanelHeader title="编译" closable />
        <div className="flex gap-2 px-1 pt-1 text-[15px] leading-none text-[#2a3f8c]">
          <button type="button" className="flex h-5 w-[79px] items-center border border-black bg-[#6fb0ec]">
            <svg viewBox="0 0 20 20" className="h-5 w-[19px] shrink-0"><circle cx="10" cy="10" r="9.500" fill="#d01c26" /><path d="M6 6l8 8M14 6l-8 8" stroke="#fff" strokeWidth="2.400" /></svg>
            <span className="ml-[6px] pb-1">0</span>
            <span className="ml-2 pb-1">错误</span>
          </button>
          <button type="button" className="flex h-5 w-[79px] items-center border border-black bg-[#6fb0ec]">
            <svg viewBox="0 0 20 20" className="h-5 w-[19px] shrink-0"><path d="M10 0l10 19.500H0z" fill="#f7e017" stroke="#776a10" strokeWidth=".6" /><path d="M10 6v7M10 15v2.500" stroke="#222" strokeWidth="2.200" /></svg>
            <span className="ml-[6px] pb-1">0</span>
            <span className="ml-2 pb-1">警告</span>
          </button>
        </div>
        <div className="mx-[3px] mt-[3px] flex h-5 items-center bg-[#3d3e42]">
          <span className="ml-[30px] h-3 w-[2px] bg-white" />
          <span className="ml-9 h-3 w-px bg-white" />
          <span className="ml-auto h-3 w-px bg-white" />
        </div>
      </div>
      <div className="flex h-[26px] shrink-0 gap-[2px] text-[15px] leading-none">
        <button type="button" className="h-[25px] w-[41px] bg-[#515257] pb-[2px] text-[#a2a3a8]">输出</button>
        <button type="button" className="w-10 bg-[#6fb3f2] pb-[2px] text-black">编译</button>
      </div>
    </section>
  );
}

/* ---------- toolbox ---------- */

function Toolbox() {
  return (
    <aside className="relative mr-2 flex w-[248px] shrink-0 flex-col border-r border-[#d6d6d6] bg-[#4c4b4f]">
      <PanelHeader title="工具箱" />
      <div className="mx-[2px] mt-[2px] h-[215px] border border-black">
        <div className="mt-px h-[21px] border-t border-r border-white bg-[#3d3e42] pl-px text-[15px] leading-[18px] text-white">目标设备</div>
      </div>
      <div className="flex gap-[6px] px-[6px] py-[6px]">
        <button type="button" aria-label="从文件导入" className={`flex h-8 w-[38px] items-center justify-center ${raised}`}>
          <svg viewBox="0 0 20 20" className="size-5"><path d="M0 1h5l1 2h6v7H0z" fill="#c4c4c8" /><path d="M14 3h5v5h-2V5h-3zM6 11h14v3H6z" fill="#b5b5b9" /><path d="M6 15h14v5H6z" fill="#8f9096" /><path d="M11 15v5M15 15v5" stroke="#66676d" /></svg>
        </button>
        <button type="button" aria-label="添加" className={`flex h-8 w-[38px] items-center justify-center ${raised}`}>
          <svg viewBox="0 0 16 16" className="size-4"><path d="M6.500 1h3v5.500H15v3H9.500V15h-3V9.500H1v-3h5.500z" fill="#fff" /></svg>
        </button>
        <button type="button" aria-label="删除" className={`flex h-8 w-[38px] items-center justify-center ${raised}`}>
          <Glyph name="trash" className="size-[18px] text-[#7b7c84]" />
        </button>
      </div>
      <div className="mt-2 flex flex-1 flex-col border-y border-black">
        <div className="mr-[2px] ml-1 flex h-5 items-center bg-[#3d3e42] text-[15px] leading-none text-white">
          <span className="w-[124px] text-center">变量名</span>
          <span className="h-[11px] w-px bg-white" />
          <span className="flex-1 pl-[6px] text-center">大小[字节]</span>
        </div>
      </div>
      <div className="flex h-[38px] shrink-0 items-center pl-[6px]">
        <button type="button" className={`h-[25px] w-[87px] ${dimmed}`}>导入标签组</button>
      </div>
      <div className="absolute top-[240px] -right-[6px] flex h-[75px] w-[11px] flex-col justify-end rounded-full border-2 border-[#77777a] bg-[#303033]/40">
        <div className="h-[38px] rounded-full bg-linear-to-b from-[#1fa848] to-[#6ff27c]" />
      </div>
    </aside>
  );
}

/* ---------- dialog ---------- */

const vars: { group: boolean; name: string; type: string; size: string; h: string }[] = [
  { group: true, name: "输入标签", type: "", size: "", h: "h-[27px]" },
  { group: false, name: "iEipIn", type: "ARRAY[0..19] OF DINT", size: "80", h: "h-7" },
  { group: true, name: "输出标签", type: "", size: "", h: "h-[27px]" },
  { group: false, name: "iEipOut", type: "ARRAY[0..19] OF DINT", size: "80", h: "h-7" },
];

function Dialog() {
  return (
    <div role="dialog" aria-labelledby="dlg-title" className="absolute top-[347px] right-[376px] left-[437px] flex h-[615px] flex-col bg-[#4c4b4f] shadow-[0_2px_14px_rgba(0,0,0,0.6)]">
      <div className="flex h-[37px] shrink-0 items-center bg-white pr-[23px] pl-[9px] text-black">
        <AppLogo className="size-5" />
        <h2 id="dlg-title" className="ml-[5px] flex-1 text-[15px] leading-none">标签组注册设置</h2>
        <div className="flex gap-[46px]">
          <button type="button" aria-label="最小化">
            <svg viewBox="0 0 13 13" className="size-[13px]"><path d="M0 6.500h13" stroke="currentColor" /></svg>
          </button>
          <button type="button" aria-label="最大化">
            <svg viewBox="0 0 13 13" className="size-[13px]"><path d="M.5 .5h12v12H.5z" fill="none" stroke="currentColor" /></svg>
          </button>
          <button type="button" aria-label="关闭">
            <svg viewBox="0 0 13 13" className="size-[13px]"><path d="M.5 .5l12 12M12.500 .5l-12 12" stroke="currentColor" strokeWidth="1.200" /></svg>
          </button>
        </div>
      </div>
      <p className="mt-[5px] h-[19px] pl-1 text-[15px] leading-[18px] text-[#f0f0f0]">选择要设置的变量。</p>
      <div className="mr-[5px] ml-[5px] flex h-[494px] flex-col border border-black">
        <table className="w-full table-fixed border-collapse text-[15px] leading-none text-white">
          <colgroup>
            <col className="w-[25px]" />
            <col className="w-9" />
            <col className="w-[250px]" />
            <col className="w-[250px]" />
            <col className="w-[125px]" />
            <col />
          </colgroup>
          <thead>
            <tr className="h-5 bg-[#3d3e42]">
              <td className="bg-[#363638]" />
              <td className="border-r-2 border-[#9b9b9e]" />
              <th scope="col" className="border-r-2 border-[#9b9b9e] font-normal">变量名</th>
              <th scope="col" className="border-r-2 border-[#9b9b9e] font-normal">数据类型</th>
              <th scope="col" className="border-r-2 border-[#9b9b9e] font-normal">大小</th>
              <th scope="col" className="pl-[90px] font-normal">注释</th>
            </tr>
          </thead>
          <tbody>
            {vars.map((v) => (
              <tr key={v.name} className={`${v.h} ${v.group ? "bg-linear-to-b from-[#73747d] to-[#41434a]" : "bg-[#5b5a5e]"}`}>
                <td className="border-b border-[#a4a4a6] bg-[#3f4045]" />
                <td className="border-r border-b border-black p-0 pl-2 align-top">
                  <label className="relative mt-[2px] block size-4">
                    <span className="sr-only">{v.name}</span>
                    <input type="checkbox" defaultChecked className="block size-4 appearance-none border border-[#55718f] bg-[#7fb7f0]" />
                    <svg viewBox="0 0 16 16" className="pointer-events-none absolute inset-0 size-4 overflow-visible" aria-hidden="true">
                      <path d="M3 6l4 5 9-11" fill="none" stroke="#24388a" strokeWidth="2.200" />
                    </svg>
                  </label>
                </td>
                <td className="border-r border-b border-black p-0">
                  {v.group ? (
                    <span className="flex items-center gap-1 pl-2">
                      <Tri open />
                      {v.name}
                    </span>
                  ) : (
                    <span className="block pb-[2px] pl-[42px]">{v.name}</span>
                  )}
                </td>
                <td className="border-r border-b border-black p-0 pb-2 pl-1 text-base leading-none">{v.type}</td>
                <td className="border-r border-b border-black p-0 pb-2 pl-1 text-base leading-none">{v.size}</td>
                <td className="border-b border-black" />
              </tr>
            ))}
          </tbody>
        </table>
        <div className="mt-auto pl-[27px]">
          <HScroll thumb="w-[92%]" />
        </div>
      </div>
      <div className="mt-2 flex gap-[5px] pr-[90px] pl-2">
        <button type="button" className={`h-[26px] w-[130px] ${raised}`}>选中所选的项目</button>
        <button type="button" className={`h-[26px] w-[130px] ${raised}`}>取消所选的项目</button>
        <span className="flex-1" />
        <button type="button" className={`h-[26px] w-[55px] ${raised}`}>注册</button>
        <button type="button" className={`h-[26px] w-[55px] ${raised}`}>取消</button>
      </div>
    </div>
  );
}

/* ---------- red callouts drawn over the windows ---------- */

function Callouts() {
  return (
    <svg viewBox="0 0 1920 1080" className="pointer-events-none absolute top-0 left-0 h-[1080px] w-[1920px]" aria-hidden="true">
      <g stroke="#ed1c24" strokeLinecap="round" fill="none">
        <path d="M457 423h47v119h-47z" strokeWidth="2" />
        <path d="M936 681L1217 312M701 687L521 490M1057 756L1343 903" strokeWidth="5.500" />
      </g>
      <g fill="#ed1c24">
        <path d="M1231 293L1209 306L1216 309L1222 313L1225 318z" />
        <path d="M509 477L533 487L525 491L520 496L518 506z" />
        <path d="M1361 911L1345 892L1345 900L1341 906L1335 910z" />
      </g>
      <g fill="#ed1c24" stroke="#fff" strokeWidth="3" paintOrder="stroke" fontFamily="Liberation Serif, serif" fontSize="30" textAnchor="middle">
        <text x="719" y="690">2</text>
        <text x="927" y="686">1</text>
        <text x="1042" y="759">3</text>
      </g>
    </svg>
  );
}

/* ---------- taskbar ---------- */

const taskIcons: { name: string; active?: boolean; art: ReactNode }[] = [
  {
    name: "Edge",
    art: (
      <>
        <path d="M0 15C0 6 7 0 15 0c9 0 15 6 15 12 0 5-4 8-8 8-3 0-4-1-3-3 2-3-1-7-6-7C7 10 1 12 0 15z" fill="#33b6c9" />
        <path d="M15 0c9 0 15 6 15 12 0 5-4 8-8 8-3 0-4-1-3-3 2-2 1-4-1-5 5-2 4-9-3-12z" fill="#5fd45c" />
        <path d="M0 15c0-5 7-8 12-6-5 2-8 7-6 13 1 4 5 7 9 8C6 30 0 23 0 15z" fill="#1b84d6" />
        <path d="M12 11c-5 3-7 8-4 14 3 4 8 6 13 4 3-1 5-3 7-6-4 3-11 3-14-1-3-4-2-8-2-11z" fill="#0e57a8" />
      </>
    ),
  },
  {
    name: "计算器",
    art: (
      <>
        <path d="M5 .5h20v29H5z" fill="#bdd6ec" stroke="#7d9cb5" />
        <path d="M7 3h16v9H7z" fill="#eaf4fc" />
        <path d="M7 3h16v1.500H7z" fill="#f0a541" />
        <path d="M19 6h2v4h-2z" fill="none" stroke="#456" strokeWidth=".8" />
        <path d="M7 16h16M7 19.500h16M7 23h16M7 26.500h11" stroke="#6a9dc4" strokeWidth="2.200" strokeDasharray="2.400 1" />
        <path d="M20.500 21.500h2.500v6h-2.500z" fill="#f0a541" />
      </>
    ),
  },
  {
    name: "文件资源管理器",
    art: (
      <>
        <path d="M1 3h11l2 3h-13z" fill="#e2a314" />
        <path d="M1 7h12l2-2h14v20H1z" fill="#fbd25e" />
        <path d="M6 26V17q0-2 2-2h14q2 0 2 2v9h-5v-5h-8v5z" fill="#3f9be0" />
      </>
    ),
  },
  {
    name: "WPS",
    art: (
      <>
        <path d="M0 6h6l5 13 2-6 3 4-4 8H8z" fill="#f0401c" />
        <path d="M9 11h4l5 8 5-13h7l-8 19h-5z" fill="#ff4a22" />
        <path d="M2 6h12l2 3H6z" fill="#d8350f" />
        <path d="M15 6h5l-2 5h-5z" fill="#ff8a33" />
      </>
    ),
  },
  {
    name: "Sysmac 启动器",
    art: (
      <>
        <rect x="1" y="1" width="28" height="28" rx="2" fill="#5a7ab8" stroke="#101a30" strokeWidth="1.500" />
        <path d="M2.500 2.500h25v5q-12 1-25 6z" fill="#8ba6d8" />
        <path d="M6 7h16v16H6z" fill="#4a69a4" stroke="#e4e8f0" strokeWidth="1.800" />
        <path d="M9 10h10v10H9z" fill="#7f98ca" stroke="#2f4a80" />
        <path d="M13 13l2-1 4 5 7 2 1 5h-7l-5-5h3z" fill="#e9e9ee" />
      </>
    ),
  },
  {
    name: "汇川",
    art: (
      <>
        <circle cx="15" cy="15" r="15" fill="#fb1a20" />
        <path d="M7.500 12l-1.500 8M12 10l-2 10h3l2-10M17 10l-2 10M19 10h3l-2 10M24 10l-3 13" stroke="#fff" strokeWidth="2" fill="none" />
      </>
    ),
  },
  {
    name: "Sysmac Studio",
    active: true,
    art: (
      <>
        <path d="M1 1h28v28H1z" fill="#0a0d12" stroke="#b9bcc0" strokeWidth="1.500" />
        <path d="M15 2h13v9l-8 1q-6-3-12 0z" fill="#4a4f55" />
        <g stroke="#9ad0e0" strokeWidth="1.200" fill="none">
          <path d="M3 12q11-7 23 3M3 17l7-1M5 22l6-5M9 27l4-8M14 28l1-8M19 27l-2-8M24 24l-5-6M27 19l-7-2M7 25l5-7M22 26l-4-7M4 20l7-4M26 22l-7-5M12 28l2-8M17 28v-8" />
        </g>
        <path d="M21 3l-1 6M27 6l-9 3M16 4l7 7" stroke="#ddd" />
        <ellipse cx="15" cy="16" rx="4" ry="3" fill="#000" />
      </>
    ),
  },
  {
    name: "cMT Viewer",
    art: (
      <>
        <rect x="0" y=".5" width="30" height="29" rx="5" fill="#f2f2f2" />
        <path d="M1 21q14 8 28 0v5q0 3-4 3H5q-4 0-4-3z" fill="#f3a13c" />
        <path d="M15 17l6 6h-3v6h-6v-6H9z" fill="#f08b1c" />
        <text x="15" y="11.500" textAnchor="middle" fontSize="10" fontWeight="600" fill="#333">cMT</text>
        <text x="15" y="17.500" textAnchor="middle" fontSize="6.500" fontWeight="600" fill="#333">Viewer</text>
      </>
    ),
  },
];

function Taskbar() {
  return (
    <footer className="relative flex h-[50px] shrink-0 bg-linear-to-r from-[#213740] via-[#20323f] to-[#1a2740] text-white">
      <button type="button" aria-label="开始" className="flex w-[60px] items-center justify-center">
        <svg viewBox="0 0 20 20" className="size-5"><path d="M0 3l8.500-1.200V9.500H0zM9.500 1.600L20 0v9.500H9.500zM0 10.500h8.500v7.700L0 17zM9.500 10.500H20V20L9.500 18.400z" fill="#fff" /></svg>
      </button>
      <label className="flex w-[358px] items-center gap-4 bg-white pl-6">
        <span className="sr-only">搜索</span>
        <svg viewBox="0 0 24 24" className="size-6 shrink-0"><circle cx="11.500" cy="10.500" r="9" fill="none" stroke="#000" strokeWidth="2" /><path d="M18 17l5 6" stroke="#000" strokeWidth="2.400" /></svg>
        <input type="text" placeholder="搜索" className="w-full bg-transparent text-xl text-black outline-none placeholder:text-[#b5b5b5]" />
      </label>
      <button type="button" aria-label="搜索要点" className="flex w-[58px] items-center justify-center pr-1">
        <svg viewBox="0 0 24 24" className="size-6"><g fill="none" stroke="#fff" strokeWidth="1.700"><path d="M9 4L3 8v6M15 4l6 4v6M7 20l5 3 5-3" /></g><circle cx="12" cy="3" r="2.200" fill="#fff" /><circle cx="3.500" cy="17.500" r="2.200" fill="#fff" /><circle cx="20.500" cy="17.500" r="2.200" fill="#fff" /></svg>
      </button>
      {taskIcons.map((t) => (
        <button key={t.name} type="button" aria-label={t.name} className={`mr-[2px] flex w-[60px] flex-col items-center ${t.active ? "bg-[#4a5b66]" : ""}`}>
          <svg viewBox="0 0 30 30" className="mt-[10px] size-[30px]" fontFamily="Open Sans, sans-serif">{t.art}</svg>
          <span className={`mt-auto h-[3px] bg-[#76b9ed] ${t.active ? "w-full" : "w-[51px]"}`} />
        </button>
      ))}
      <div className="ml-auto flex items-center pr-8 text-[15px] leading-none">
        <svg viewBox="0 0 16 10" className="mr-[14px] h-[10px] w-4"><path d="M1 9l7-7 7 7" fill="none" stroke="#fff" strokeWidth="1.500" /></svg>
        <svg viewBox="0 0 14 18" className="mr-[13px] h-[18px] w-[14px]"><path d="M0 0h6v5H0zM8 0h6v5H8zM0 6h14v12l-4-5H4l-4 5z" fill="#fff" /></svg>
        <svg viewBox="0 0 20 20" className="mr-3 size-5"><path d="M1 2l18-2v14M1 2v15l11 2" fill="none" stroke="#fff" strokeWidth="1.500" /><path d="M6 9a4 4 0 0 1 7-1M13 11a4 4 0 0 1-7 1" fill="none" stroke="#fff" strokeWidth="1.500" /><circle cx="15.500" cy="15.500" r="4.500" fill="#f39019" /></svg>
        <svg viewBox="0 0 20 20" className="mr-[10px] size-5"><circle cx="10" cy="10" r="9.800" fill="#f21d24" /><path d="M5 9v5M8 7v7M11 8v6M13.500 6v8M16 7v4" stroke="#fff" strokeWidth="1.700" /></svg>
        <svg viewBox="0 0 20 14" className="mr-3 h-[14px] w-5"><path d="M5 4h14v9H5z" fill="none" stroke="#fff" strokeWidth="1.500" /><path d="M6 5h11v7H6z" fill="#fff" /><path d="M0 1h5v4H0zM2.500 5v7" fill="none" stroke="#fff" strokeWidth="1.500" /></svg>
        <svg viewBox="0 0 18 18" className="mr-[5px] size-[18px]"><path d="M2 17C2 8 8 2 17 2M6 17c0-6 4-11 11-11M10 17c0-4 3-7 7-7M14 17c0-2 1-3 3-3" fill="none" stroke="#fff" strokeWidth="1.300" /></svg>
        <span className="mr-[14px] text-xl leading-none">英</span>
        <p className="mr-[26px] flex flex-col items-center gap-2"><time>22:14</time><time>2024/12/6</time></p>
        <button type="button" aria-label="通知" className="relative">
          <svg viewBox="0 0 20 20" className="size-5"><path d="M0 0h20v15h-8l-4 4v-4H0z" fill="#fff" /><path d="M4 5h12M4 9h12" stroke="#1a2740" strokeWidth="1.500" /></svg>
          <span className="absolute top-[9px] left-[9px] flex size-5 items-center justify-center rounded-full border border-[#777] bg-[#2b2f36] text-sm leading-none">1</span>
        </button>
      </div>
      <p className="pointer-events-none absolute right-[5px] bottom-[13px] text-[37px] leading-none whitespace-nowrap text-white/65 [font-family:'Liberation_Sans','Noto_Sans_CJK_SC',sans-serif]">CSDN @小飞侠#983</p>
    </footer>
  );
}

export default function App() {
  return (
    <div className="relative flex min-h-screen w-full flex-col overflow-hidden bg-black [font-family:'Open_Sans','Noto_Sans_CJK_SC',sans-serif]">
      <TitleBar />
      <MenuBar />
      <Toolbar />
      <main className="flex flex-1 items-stretch pt-[9px] pb-2 pl-[9px]">
        <Explorer />
        <div className="mr-2 ml-2 flex min-w-0 flex-1 flex-col">
          <EditorTabs />
          <Editor />
          <BuildPanel />
        </div>
        <Toolbox />
      </main>
      <div className="h-8 shrink-0 border-t border-[#a5a5a5] bg-[#1f1f21]" />
      <Taskbar />
      <Dialog />
      <Callouts />
    </div>
  );
}
